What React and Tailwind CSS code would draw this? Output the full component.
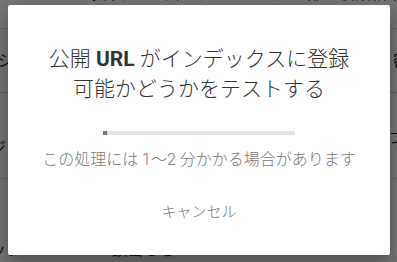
export default function App() {
  return (
    <div className="relative h-[262px] w-[397px] overflow-hidden bg-white text-[#202124] font-['Roboto','Noto_Sans_CJK_JP',sans-serif]">
      {/* page behind the dialog */}
      <div className="h-[29px] border-b border-[#dadce0] overflow-hidden">
        <p className="-mt-[18px] whitespace-nowrap text-[16px] pl-[4px]">
          サイトが登録済みか全面にすってでは、一部の検索結果情報を確認
        </p>
      </div>
      <div className="h-[64px] border-b border-[#bdc1c6] flex items-center justify-between whitespace-nowrap text-[16px]">
        <span className="-ml-[34px]">ページ</span>
        <span className="-mr-[12px]">密</span>
      </div>
      <div className="h-[86px] border-b border-[#dadce0] flex items-end justify-between pb-[18px] whitespace-nowrap text-[16px]">
        <span className="-ml-[10px]">ジ</span>
        <span className="-mr-[10px] border-t border-black pt-[2px]">で</span>
      </div>
      <div className="h-[83px] flex items-end justify-between whitespace-nowrap text-[16px] -mb-[12px]">
        <span className="-ml-[10px]">ップ</span>
        <span className="mr-[132px]">該当なし</span>
        <span />
      </div>

      {/* scrim */}
      <div className="absolute inset-0 bg-black/[0.54]" />

      {/* dialog */}
      <div className="absolute left-[8px] top-[5px] w-[382px] h-[250px] bg-white rounded-[2px] shadow-[0_8px_20px_rgba(0,0,0,0.35)] flex flex-col items-center">
        <h2 className="mt-[39px] text-center text-[21px] leading-[30px] text-[#333333] font-light">
          公開 <span className="font-bold">URL</span> がインデックスに登録
          <br />
          可能かどうかをテストする
        </h2>
        <div className="mt-[27px] w-[192px] h-[4px] bg-[#e5e5e5] flex">
          <div className="w-[4px] h-full bg-[#5b7a8a]" />
        </div>
        <p className="mt-[13px] text-[16px] leading-[24px] text-[#777777] font-light">
          この処理には 1〜2 分かかる場合があります
        </p>
        <button className="mt-[22px] h-[36px] px-[8px] text-[15px] text-[#777777] font-light">
          キャンセル
        </button>
      </div>
    </div>
  )
}
